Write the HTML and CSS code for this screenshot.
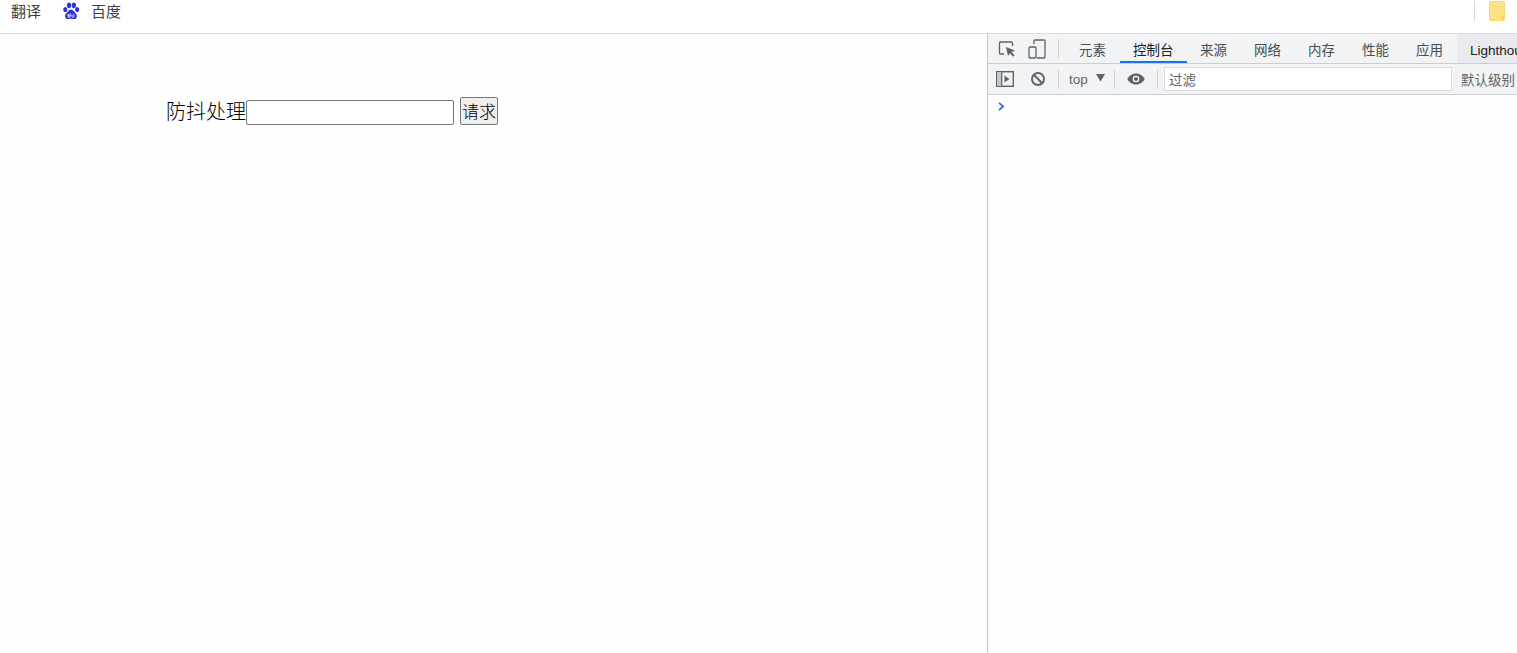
FILE: index.html
```html
<!DOCTYPE html>
<html lang="zh-CN">
<head>
<meta charset="utf-8">
<title>防抖处理</title>
<link rel="stylesheet" href="styles.css">
</head>
<body>
<header class="bookmarks">
  <span class="bm bm-first">翻译</span>
  <svg class="paw" width="18" height="20" viewBox="0 0 18 20"><g fill="#2932e1"><ellipse cx="3" cy="8" rx="2.2" ry="2.8"/><ellipse cx="7" cy="3.5" rx="2.2" ry="3"/><ellipse cx="12" cy="3.5" rx="2.2" ry="3"/><ellipse cx="15.5" cy="8" rx="2.2" ry="2.8"/><path d="M9 8c-2.5 0-3 2.5-5 4-2 1.600-1.500 6 1.500 6 1.500 0 2.300-.5 3.500-.5s2 .5 3.500.5c3 0 3.500-4.400 1.500-6-2-1.500-2.500-4-5-4z"/></g><path d="M6 12.500v3.500h2v-4M6 14h2M10 13v2.500c0 .5 2 .5 2 0V13" fill="none" stroke="#fff" stroke-width=".9"/></svg>
  <span class="bm">百度</span>
  <div class="bar-end">
    <span class="bar-sep"></span>
    <svg class="note" width="16" height="20" viewBox="0 0 16 20"><path d="M2 .5h12a1.500 1.500 0 0 1 1.500 1.500v16a1.500 1.500 0 0 1-1.500 1.500H2A1.500 1.500 0 0 1 .5 18V2A1.500 1.500 0 0 1 2 .5z" fill="#ffe083" stroke="#f8d86e"/><path d="M12.500 19v-3a1 1 0 0 1 2 0v3z" fill="#f3cd55"/></svg>
  </div>
</header>
<main class="split">
  <section class="page">
    <div class="demo">
      <label class="demo-label" for="q">防抖处理</label><input class="demo-input" id="q" type="text"> <button class="demo-btn" type="button">请求</button>
    </div>
  </section>
  <aside class="devtools">
    <div class="tabs">
      <div class="tool-icons">
        <svg width="18" height="18" viewBox="0 0 18 18"><path d="M6 14H2.500a1 1 0 0 1-1-1V3a1 1 0 0 1 1-1h11a1 1 0 0 1 1 1v3" fill="none" stroke="#5f6368" stroke-width="1.300"/><path d="M8 7l9 3.500-3.500 1.500 3 3.500-1.500 1.200-3-3.500L10 16z" fill="#5f6368"/></svg>
        <svg width="18" height="20" viewBox="0 0 18 20"><path d="M6 5V2a1 1 0 0 1 1-1h9a1 1 0 0 1 1 1v16a1 1 0 0 1-1 1H9" fill="none" stroke="#5f6368" stroke-width="1.300"/><rect x="1" y="8" width="7" height="11" rx="1" fill="none" stroke="#5f6368" stroke-width="1.300"/></svg>
      </div>
      <span class="vsep"></span>
      <nav class="tab-list">
        <span class="tab">元素</span>
        <span class="tab tab-active">控制台</span>
        <span class="tab">来源</span>
        <span class="tab">网络</span>
        <span class="tab">内存</span>
        <span class="tab">性能</span>
        <span class="tab">应用</span>
        <span class="tab tab-dim">Lighthouse</span>
      </nav>
    </div>
    <div class="toolbar">
      <svg class="ti-side" width="18" height="16" viewBox="0 0 18 16"><rect x=".7" y=".7" width="16.600" height="14.600" fill="none" stroke="#5f6368" stroke-width="1.400"/><rect x="1" y="1" width="4.500" height="14" fill="#c4c7ca"/><path d="M5.700 1v14" stroke="#5f6368" stroke-width="1.200"/><path d="M8.500 4.500l5 3.500-5 3.500z" fill="#5f6368"/></svg>
      <svg class="ti-clear" width="16" height="16" viewBox="0 0 16 16"><circle cx="8" cy="8" r="6" fill="none" stroke="#5f6368" stroke-width="2"/><path d="M3.800 3.800l8.400 8.400" stroke="#5f6368" stroke-width="2"/></svg>
      <span class="vsep vsep-a"></span>
      <span class="ctx">top</span>
      <svg class="caret" width="9" height="8" viewBox="0 0 9 8"><path d="M0 0h9L4.500 7.500z" fill="#5f6368"/></svg>
      <span class="vsep vsep-b"></span>
      <svg class="ti-eye" width="18" height="12" viewBox="0 0 18 12"><path d="M9 .5C5 .5 1.800 3 .3 6c1.500 3 4.700 5.500 8.700 5.500s7.200-2.500 8.700-5.500C16.200 3 13 .5 9 .5z" fill="#5f6368"/><circle cx="9" cy="6" r="3.300" fill="#fff"/><circle cx="9" cy="6" r="2" fill="#5f6368"/></svg>
      <span class="vsep vsep-c"></span>
      <div class="filter">过滤</div>
      <span class="levels">默认级别</span>
    </div>
    <div class="console">
      <svg class="prompt" width="7" height="9" viewBox="0 0 7 9"><path d="M1 .8L5.200 4.500 1 8.200" fill="none" stroke="#1a73e8" stroke-width="1.700"/></svg>
    </div>
  </aside>
</main>
</body>
</html>
```
FILE: styles.css
```css
* { box-sizing: border-box; }
html, body { height: 100%; }
body {
  margin: 0;
  height: 653px;
  overflow: hidden;
  background: #fefefe;
  display: flex;
  flex-direction: column;
  font-family: "Noto Sans CJK SC", "Liberation Sans", sans-serif;
}
.bookmarks {
  height: 34px;
  flex: none;
  display: flex;
  align-items: flex-start;
  padding: 1px 0 0 11px;
  background: #fff;
  border-bottom: 1px solid #dadce0;
  font-size: 15px;
  color: #3c4043;
}
.bm { line-height: 20px; width: 30px; white-space: nowrap; }
.bm-first { margin-right: 21px; }
.paw { margin: 1px 11px 0 0; height: 19px; }
.bar-end {
  margin-left: auto;
  display: flex;
  align-items: flex-start;
  padding-right: 12px;
}
.bar-sep { width: 1px; height: 20px; background: #d5d7da; margin-right: 14px; }
.split { flex: 1; display: flex; min-height: 0; }
.page { width: 987px; flex: none; background: #fefefe; padding: 63px 0 0 166px; }
.demo {
  display: flex;
  align-items: flex-end;
  height: 28px;
  font-size: 20px;
  color: #000;
}
.demo-label { line-height: 29px; width: 80px; white-space: nowrap; font-weight: 300; }
.demo-input {
  width: 208px;
  height: 25px;
  padding: 0 2px;
  border: 1px solid #767676;
  border-radius: 2px;
  background: #fff;
  margin: 0 6px 0 0;
}
.demo-btn {
  width: 38px;
  height: 28px;
  padding: 0;
  margin: 0;
  white-space: nowrap;
  font: 300 17px/26px "Noto Sans CJK SC", sans-serif;
  color: #000;
  background: #efefef;
  border: 1px solid #767676;
  border-radius: 2px;
}
.devtools {
  flex: 1;
  min-width: 0;
  border-left: 1px solid #c4c7cb;
  background: #fefefe;
  display: flex;
  flex-direction: column;
  overflow: hidden;
  font-size: 13.5px;
  color: #5f6368;
}
.tabs {
  height: 30px;
  flex: none;
  display: flex;
  align-items: center;
  background: #f1f3f4;
  border-bottom: 1px solid #cacdd1;
  padding-left: 10px;
}
.tool-icons { display: flex; align-items: center; gap: 12px; width: 60px; flex: none; }
.vsep { width: 1px; height: 19px; background: #cdd0d4; flex: none; }
.tab-list { display: flex; height: 100%; margin-left: 7px; flex: none; }
.tab {
  width: 54px;
  padding-left: 13px;
  line-height: 31px;
  white-space: nowrap;
  color: #4a4d51;
}
.tab-active {
  width: 67px;
  color: #202124;
  box-shadow: inset 0 -2px 0 #1a73e8;
  height: 29px;
}
.tab-dim { width: 70px; background: #e8eaed; font-family: "Liberation Sans", sans-serif; color: #202124; line-height: 33px; }
.toolbar {
  height: 31px;
  flex: none;
  display: flex;
  align-items: center;
  background: #f1f3f4;
  border-bottom: 1px solid #cacdd1;
  padding-left: 8px;
}
.ti-clear { margin-left: 16px; }
.vsep-a { margin-left: 12px; }
.ctx { margin-left: 10px; width: 24px; font-family: "Liberation Sans", sans-serif; font-size: 13.5px; line-height: 18px; padding-top: 2px; }
.caret { margin: -3px 0 0 3px; }
.vsep-b { margin-left: 9px; }
.ti-eye { margin-left: 12px; }
.vsep-c { margin-left: 12px; }
.filter {
  flex: none;
  width: 288px;
  height: 24px;
  margin-left: 6px;
  padding-left: 4px;
  line-height: 22px;
  background: #fff;
  border: 1px solid #dadce0;
  color: #5f6368;
}
.levels { margin-left: 9px; white-space: nowrap; }
.console { flex: 1; background: #fefefe; padding: 3px 0 0 10px; }
.prompt { display: block; margin-top: 4px; }
```
